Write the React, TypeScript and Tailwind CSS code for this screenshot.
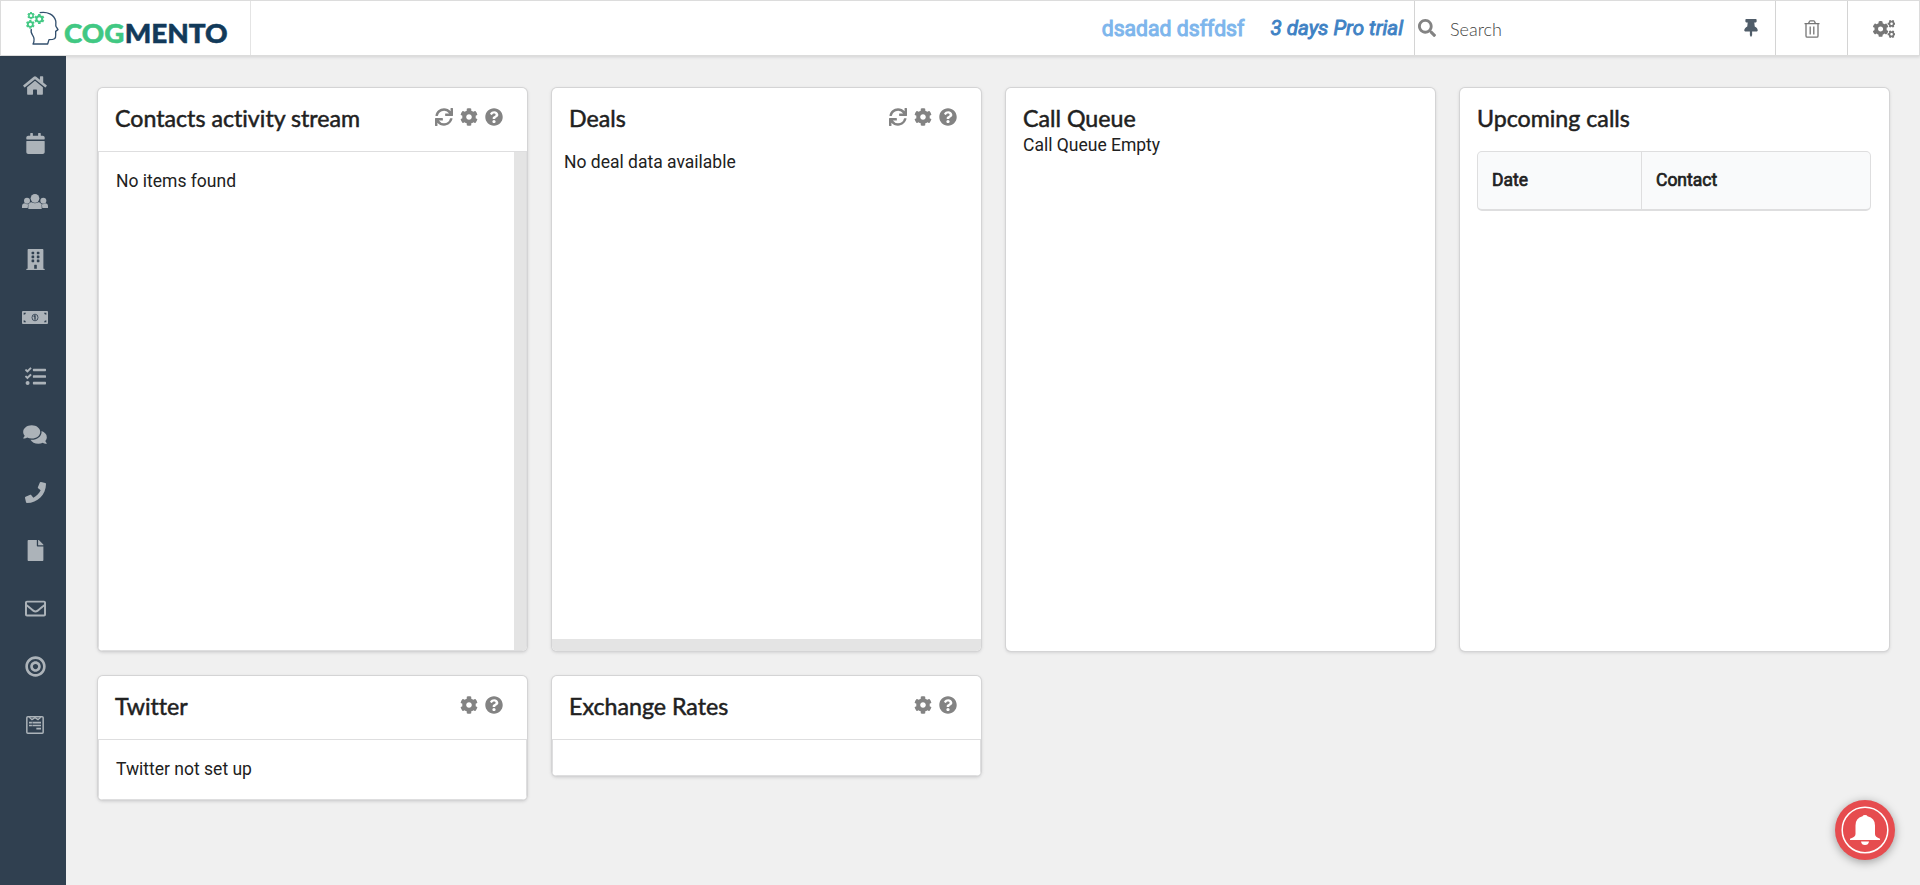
import type { ReactNode } from "react";
import {
  FaBuilding, FaBullseye, FaCalendar, FaCog, FaCogs, FaComments, FaFile, FaHome,
  FaPhone, FaQuestionCircle, FaRegEnvelope, FaSearch, FaSync,
  FaTasks, FaThumbtack,
} from "react-icons/fa";

function UsersIcon({ className }: { className?: string }) {
  return (
    <svg className={className} viewBox="0 0 78 45" fill="currentColor">
      <circle cx="15" cy="20" r="9" />
      <circle cx="64" cy="20" r="9" />
      <path d="M0 42V37Q0 28 9 28Q15 33 21 29Q17 33 17 42ZM78 42V37Q78 28 69 28Q63 33 57 29Q61 33 61 42Z" />
      <circle cx="39" cy="13" r="13" />
      <path d="M19 45V37Q19 26 29 25Q39 31 49 25Q59 26 59 37V45Z" />
    </svg>
  );
}

function MoneyIcon({ className }: { className?: string }) {
  return (
    <svg className={className} viewBox="0 0 78 39">
      <rect width="78" height="39" rx="3" fill="currentColor" />
      <g fill="#304050">
        <path d="M5 5h7q-1 6-7 6zM73 5h-7q1 6 7 6zM5 34h7q-1-6-7-6zM73 34h-7q1-6 7-6z" />
        <path d="M36 13h5v13h-4V17h-3z" />
      </g>
      <ellipse cx="39" cy="19.5" rx="9" ry="10" fill="none" stroke="#304050" strokeWidth="2.5" />
    </svg>
  );
}

function FormIcon({ className }: { className?: string }) {
  return (
    <svg className={className} viewBox="0 0 54 54" fill="none" stroke="currentColor">
      <rect x="2.500" y="2.500" width="49" height="49" rx="3" strokeWidth="4.500" />
      <path d="M10 4l8 7 9-6 9 6 8-7" strokeWidth="4" />
      <path d="M9 20h36M9 28.500h36M31 38h14" strokeWidth="5" />
      <path d="M19 17v15" stroke="#304050" strokeWidth="1.500" />
    </svg>
  );
}

const navIcons = [
  { Icon: FaHome, size: "h-[21px] w-[24px]" },
  { Icon: FaCalendar, size: "h-[21px] w-[21px]" },
  { Icon: UsersIcon, size: "h-[15px] w-[26px]" },
  { Icon: FaBuilding, size: "h-[21px] w-[21px]" },
  { Icon: MoneyIcon, size: "h-[13px] w-[26px]" },
  { Icon: FaTasks, size: "h-[21px] w-[21px]" },
  { Icon: FaComments, size: "h-[21px] w-[24px]" },
  { Icon: FaPhone, size: "h-[21px] w-[21px]" },
  { Icon: FaFile, size: "h-[21px] w-[21px]" },
  { Icon: FaRegEnvelope, size: "h-[21px] w-[21px]" },
  { Icon: FaBullseye, size: "h-[21px] w-[21px]" },
  { Icon: FormIcon, size: "h-[18px] w-[18px]" },
];

function Gear({ x, y, r }: { x: number; y: number; r: number }) {
  return (
    <g transform={`translate(${x} ${y})`} fill="none" stroke="#41c883">
      <circle r={r * 0.58} strokeWidth={r * 0.42} />
      {[0, 60, 120, 180, 240, 300].map((a) => (
        <path key={a} d={`M0 ${-r * 0.7}V${-r}`} strokeWidth={r * 0.5} transform={`rotate(${a})`} />
      ))}
    </g>
  );
}

function Logo() {
  return (
    <svg className="h-[54px] w-[249px]" viewBox="3 3 747 162">
      <path
        d="M119 38C142 34 162 43 167 62C169 71 166 75 168 79L174 89L167 94L167 105C168 116 163 119 147 119L143 132L99 132C104 122 103 113 98 106C94 101 92 95 94 87"
        fill="none" stroke="#33506e" strokeWidth="4" strokeLinejoin="round"
      />
      <Gear x={93} y={47} r={11} />
      <Gear x={118} y={57} r={15} />
      <Gear x={91} y={73} r={13} />
      <g fontSize="81" fontWeight="900" fontFamily="Lato, sans-serif" strokeWidth="1.5">
        <text x="192" y="130" fill="#41c883" stroke="#41c883" textLength="181" lengthAdjust="spacingAndGlyphs">COG</text>
        <text x="374" y="130" fill="#123a5a" stroke="#123a5a" textLength="309" lengthAdjust="spacingAndGlyphs">MENTO</text>
      </g>
    </svg>
  );
}

function TrashIcon() {
  return (
    <svg className="h-[18px] w-4" viewBox="0 0 16 18" fill="none" stroke="#767676" strokeWidth="1.3">
      <path d="M.5 3.6h15M4.6 3.4l1-2.1q.2-.5.8-.5h3.200q.6 0 .8.5l1 2.100M2 3.700V16q0 1.200 1.200 1.200h9.600q1.200 0 1.200-1.200V3.700M6.200 6.500v8M9.800 6.500v8" />
    </svg>
  );
}

function Card({ title, tools, className, children }: { title: string; tools?: "all" | "short"; className: string; children?: ReactNode }) {
  return (
    <section className={`flex flex-col overflow-hidden rounded-[5px] bg-white shadow-[0_0_0_1px_#d4d4d5,0_1px_3px_1px_#d4d4d5] ${className}`}>
      <header className="flex h-[46px] shrink-0 items-start justify-between pt-[15px] pr-[24px] pl-[17px]">
        <h2 className="font-[Lato,sans-serif] text-[23.2px] leading-[30px] font-normal text-[#212121] [-webkit-text-stroke:0.5px_#212121] [font-variant-ligatures:none]">{title}</h2>
        {tools && (
          <div className="flex gap-[7px] pt-[5px] text-[18px] text-[#838383]">
            {tools === "all" && <FaSync />}
            <FaCog />
            <FaQuestionCircle />
          </div>
        )}
      </header>
      {children}
    </section>
  );
}

export default function App() {
  return (
    <div className="flex h-[885px] w-[1920px] flex-col overflow-hidden bg-[#f0f0f0] font-[Roboto,sans-serif] text-[17.5px] text-[#212121]">
      <header className="z-10 flex h-14 shrink-0 border border-[#dcdcdc] bg-white shadow-[0_1px_3px_rgba(34,36,38,0.15)]">
        <div className="w-[250px] border-r border-[#e4e4e4]"><Logo /></div>
        <div className="flex flex-1 items-center justify-end pr-[11px]">
          <span className="mr-[26px] pt-px text-[21.2px] text-[#7eb6ec] [-webkit-text-stroke:1px_#7eb6ec]">dsadad dsffdsf</span>
          <span className="pt-px text-[20.6px] text-[#3f82c4] italic [-webkit-text-stroke:0.9px_#3f82c4]">3 days Pro trial</span>
        </div>
        <div className="flex w-[361px] items-center border-l border-[#d4d4d4] pl-[3px]">
          <FaSearch className="mb-px text-[18px] text-[#838383]" />
          <span className="ml-[14px] flex-1 pt-[2px] font-[Lato,sans-serif] text-[18px] font-light text-[#444444]">Search</span>
          <FaThumbtack className="mr-[15px] mb-px text-[18px] text-[#505d69]" />
        </div>
        <div className="flex w-[72px] items-center justify-center border-l border-[#d4d4d4] pt-[2px]"><TrashIcon /></div>
        <div className="flex w-[72px] items-center justify-center border-l border-[#d4d4d4] pt-[2px] pl-px"><FaCogs className="h-[18px] w-[22.5px] text-[#767676]" /></div>
      </header>
      <div className="flex flex-1">
        <nav className="w-[66px] shrink-0 bg-[#304050]">
          {navIcons.map(({ Icon, size }, i) => (
            <div key={i} className="flex h-[58.1px] items-center justify-center pt-px pl-[4px] text-[#acb3b9]"><Icon className={size} /></div>
          ))}
        </nav>
        <main className="grid flex-1 grid-cols-[repeat(4,429px)] content-start items-start gap-x-[25px] gap-y-[25px] pt-8 pl-8">
          <Card title="Contacts activity stream" tools="all" className="h-[563px]">
            <div className="mt-[17px] flex flex-1 justify-between border border-[#dededf]">
              <p className="pt-4 pl-[17px]">No items found</p>
              <div className="w-3 bg-[#e4e4e4]" />
            </div>
          </Card>
          <Card title="Deals" tools="all" className="h-[563px]">
            <p className="flex-1 pt-[15px] pl-3">No deal data available</p>
            <div className="h-3 bg-[#e4e4e4]" />
          </Card>
          <Card title="Call Queue" className="h-[563px]">
            <p className="-mt-[2px] pl-[17px]">Call Queue Empty</p>
          </Card>
          <Card title="Upcoming calls" className="h-[563px]">
            <div className="mr-[18px] ml-[17px] mt-[17px] flex h-[60px] items-center rounded-[5px] border border-b-2 border-[#dededf] bg-[#f9fafb] [-webkit-text-stroke:0.7px_#212121]">
              <div className="flex h-full w-[164px] items-center border-r border-[#dededf] pl-[14px]">Date</div>
              <div className="pl-[14px]">Contact</div>
            </div>
          </Card>
          <Card title="Twitter" tools="short" className="h-[124px]">
            <div className="mt-[17px] flex-1 border border-[#dededf] pt-4 pl-[17px]">Twitter not set up</div>
          </Card>
          <Card title="Exchange Rates" tools="short" className="h-[100px]">
            <div className="mt-[17px] flex-1 border border-[#dededf]" />
          </Card>
        </main>
      </div>
      <button className="absolute top-[800px] left-[1835px] size-[60px] rounded-full bg-[#e64c4f] shadow-[0_2px_10px_rgba(0,0,0,0.35)]">
        <svg viewBox="0 0 60 60">
          <circle cx="30" cy="30" r="22.800" fill="none" stroke="#fff" strokeWidth="1.500" />
          <path d="M15 40V38.800Q20.500 37 20.500 34V25.500Q20.500 18 27.500 16.300Q28 15 30 15T32.500 16.300Q40 18 40 25.500V34Q40 37 45 38.800V40ZM26 41.500H34Q33.500 45 30 45T26 41.500Z" fill="#fff" />
        </svg>
      </button>
    </div>
  );
}
